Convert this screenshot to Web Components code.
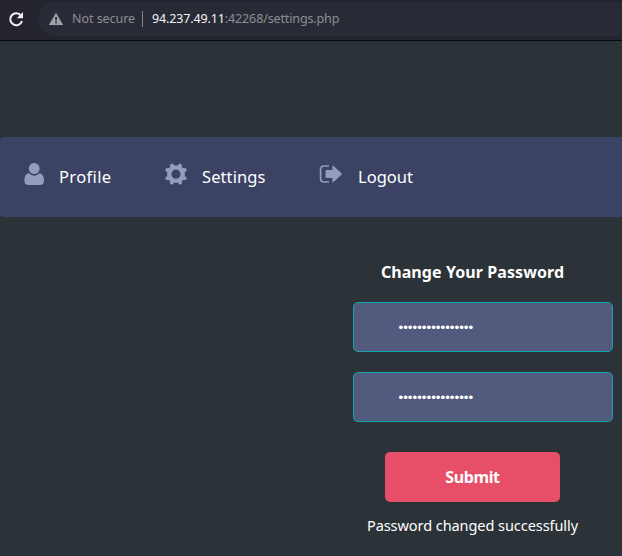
<!DOCTYPE html>
<html lang="en"><head><meta charset="utf-8"><title>Settings</title>
<style>
body{margin:0;height:556px;overflow:hidden;background:#2c3338;font-family:"Noto Sans","Open Sans",sans-serif;color:#fff}
</style></head><body>
<settings-page></settings-page>
<script>
const define=(name,html)=>customElements.define(name,class extends HTMLElement{
  constructor(){super();this.attachShadow({mode:'open'}).innerHTML=html;}
});
define('address-bar',`<style>
:host{display:flex;box-sizing:border-box;height:41px;background:#23242e;border-bottom:1px solid #08090b;padding:2px 0 4px 8px;font-size:12.5px;line-height:18px}
.reload{width:16px;height:16px;margin:9px 14px 0 0;flex:none}
.pill{flex:1;display:flex;align-items:center;background:#282a35;border-radius:17px 0 0 17px;padding-left:10px;color:#8d8f94;white-space:nowrap}
.warn{width:16px;height:16px;margin-right:8px}
.not{width:63px;letter-spacing:-.05px}
.bar{width:1px;height:16px;background:#82848a;margin:0 9px 0 7px}
b{font-weight:400;color:#f2f2f4}
.url{letter-spacing:-.13px}
</style>
<svg class="reload" viewBox="0 0 16 16"><path d="M13.1 4.7A6 6 0 1 0 14 10" fill="none" stroke="#f0f0f0" stroke-width="2"/><path d="M15 1v6.2H8.8z" fill="#f0f0f0"/></svg>
<div class="pill"><svg class="warn" viewBox="0 0 16 16"><path d="M8 1.8 15.2 14H.8z" fill="#a0a1a8"/><path d="M7.2 6h1.7v3.6H7.2zm0 4.6h1.7v1.7H7.2z" fill="#282a35"/></svg>
<span class="not">Not secure</span><i class="bar"></i><span class="url"><b>94.237.49.11</b>:42268/settings.php</span></div>`);
define('nav-item',`<style>
:host{display:flex;height:100%;font-size:16.5px;line-height:24px;color:#fff}
.icon{flex:none;display:block;padding-top:25px}
.label{padding-top:28px;white-space:nowrap}
::slotted(svg){display:block;width:24px;height:24px;fill:#949cbc}
</style><div class="icon"><slot name="icon"></slot></div><div class="label"><slot></slot></div>`);
define('nav-bar',`<style>
:host{display:flex;height:80px;background:#3b4264;border-radius:4px 0 0 4px}
nav{display:flex;padding-left:22px}
nav-item{column-gap:13px}
.profile{width:142px;letter-spacing:.36px}.settings{width:154px;letter-spacing:.1px;column-gap:14px}.logout{column-gap:16px;letter-spacing:0}
</style><nav>
<nav-item class="profile"><svg slot="icon" viewBox="0 0 24 24"><ellipse cx="12.2" cy="6.5" rx="5.4" ry="5.6"/><path d="M6.9 11.3Q12.2 16 17.5 11.3C20.7 11.8 22 14.5 22 19.1c0 2.5-1.5 3.9-4 3.9H6.4c-2.5 0-4-1.4-4-3.9 0-4.6 1.3-7.3 4.5-7.8Z"/><path d="M6.8 10.6Q12.2 15.6 17.6 10.6" fill="none" stroke="#3b4264" stroke-width=".5"/></svg>Profile</nav-item>
<nav-item class="settings"><svg slot="icon" viewBox="0 0 24 24"><path fill-rule="evenodd" d="M7.4 1.7Q8.1 1.2 8.7 1.8L10.6 3.6Q12 3.2 13.4 3.6L15.3 1.8Q15.9 1.2 16.6 1.7L17.8 2.4 18 5.2 19 6.1 22 6.2 22.8 8.2 20.7 10.4Q21 12 20.7 13.8L22.8 16 22 18 19 18.1 18 19.1 17.8 22 16.1 22.8 13.4 20.6Q12 21 10.6 20.6L7.9 22.8 6.2 22 6 19.1 5 18.1 2 18 1.2 16 3.3 13.8Q3 12 3.3 10.4L1.2 8.2 2 6.2 5 6.1 6 5.2 6.2 2.4ZM12 7.6a4.6 4.6 0 1 0 0 9.2 4.6 4.6 0 0 0 0-9.2Z"/></svg>Settings</nav-item>
<nav-item class="logout"><svg slot="icon" viewBox="0 0 24 24"><path d="M11 4H6Q2.6 4 2.6 7.4v9.2Q2.6 20 6 20h5" fill="none" stroke="#949cbc" stroke-width="1.7"/><path d="M7.5 9q0-.9.9-.9h6V4.5q0-1.5 1.2-.5l7.8 7.2q.8.8 0 1.6l-7.8 7.3q-1.2 1-1.2-.5V16h-6q-.9 0-.9-.9Z"/></svg>Logout</nav-item></nav>`);
define('password-field',`<style>
:host{display:flex;align-items:center;box-sizing:border-box;width:260px;height:50px;border:1px solid #12a5a9;border-radius:5px;background:#525a7d;padding-left:44.5px;font:13.333px "Liberation Sans",Arial,sans-serif;color:#fff}
</style><span><slot></slot></span>`);
define('submit-button',`<style>
:host{display:block}button{display:block;width:175px;height:50px;border:0;border-radius:5px;background:#e74e67;color:#fff;font:700 16px/24px "Noto Sans","Open Sans",sans-serif;letter-spacing:-.4px;padding:0}
</style><button><slot></slot></button>`);
define('password-form',`<style>
:host{display:flex;flex-direction:column;width:260px}
h1{margin:0 0 18px;width:239px;text-align:center;font-size:16px;line-height:24px;font-weight:700;letter-spacing:.08px;white-space:nowrap}
password-field{margin-bottom:20px}
submit-button{margin:10px 0 0 32px}
p{margin:12px 0 0;width:239px;text-align:center;font-size:14.5px;line-height:22px;letter-spacing:-.06px;white-space:nowrap}
</style><h1>Change Your Password</h1>
<password-field>••••••••••••••••</password-field><password-field>••••••••••••••••</password-field>
<submit-button>Submit</submit-button><p>Password changed successfully</p>`);
define('settings-page',`<style>
:host{display:flex;flex-direction:column;height:556px}
main{flex:1;display:flex;flex-direction:column;padding-top:96px;background:#2c3338}
password-form{margin:43px 0 0 353px}
</style><address-bar></address-bar><main><nav-bar></nav-bar><password-form></password-form></main>`);
</script></body></html>
